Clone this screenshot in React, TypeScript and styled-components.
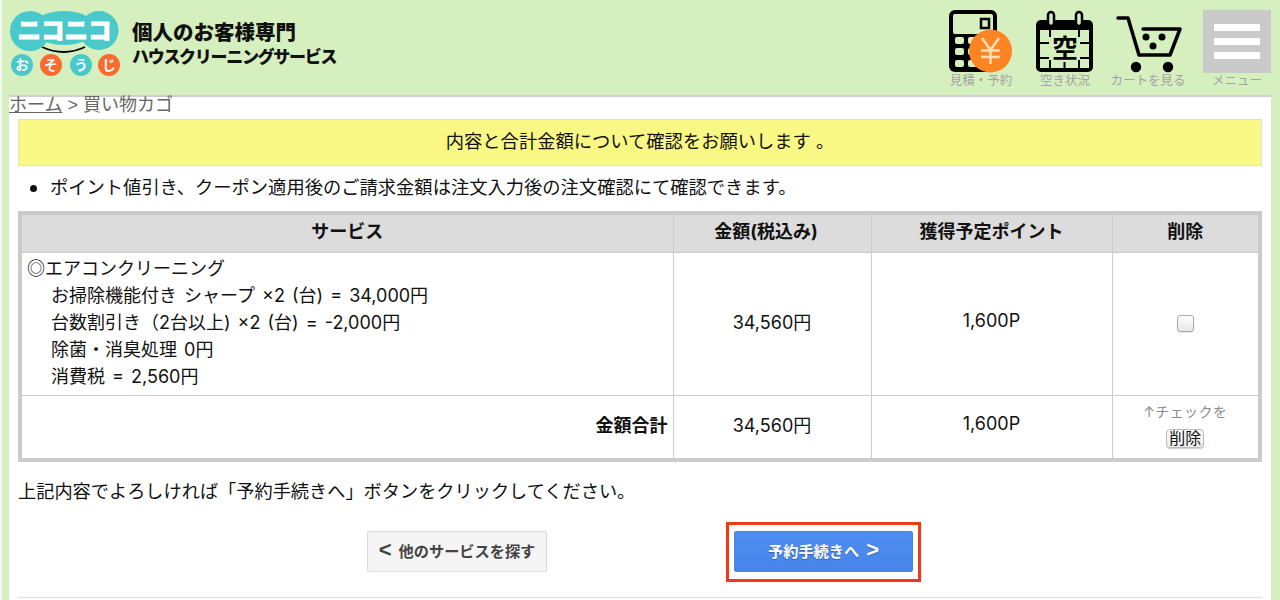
import React from 'react'
import styled, { createGlobalStyle } from 'styled-components'

const fontStack = '"Liberation Sans", "Noto Sans CJK JP", sans-serif'
const tableFont = 'Inter, "Noto Sans CJK JP", sans-serif'
const green = '#d6efbf'

const GlobalStyle = createGlobalStyle`
  html, body {
    margin: 0;
    height: 600px;
    overflow: hidden;
    background: ${green};
    font-family: ${fontStack};
    color: #111;
  }
`

const Shell = styled.div`
  display: flex;
  height: 600px;
`

const LeftEdge = styled.div`
  width: 2px;
  background: #f4f8f0;
`

const Page = styled.div`
  flex: 1;
  min-width: 0;
`

const Header = styled.header`
  display: flex;
  justify-content: space-between;
  height: 95px;
  padding: 0 9px 0 7px;
`

const Brand = styled.div`
  display: flex;
  align-items: flex-start;
  gap: 12px;
  padding-top: 8px;
`

const LogoArt = styled.svg`
  display: block;
  width: 111px;
  height: 72px;
`

const Tagline = styled.div`
  display: flex;
  flex-direction: column;
  margin-top: 12px;
  color: #111;
  font-weight: 900;
`

const TaglineMain = styled.div`
  font-size: 20.5px;
  line-height: 26px;
`

const TaglineSub = styled.div`
  font-size: 17px;
  line-height: 24px;
  letter-spacing: -1.3px;
  white-space: nowrap;
`

const Nav = styled.nav`
  display: flex;
  align-items: flex-start;
`

const NavItem = styled.a<{ $width: number }>`
  display: flex;
  flex-direction: column;
  align-items: center;
  width: ${(p) => p.$width}px;
  padding-top: 10px;
  color: #a3a3a3;
  font-size: 12.5px;
  line-height: 16px;
  white-space: nowrap;
`

const MenuItem = styled(NavItem)`
  margin-left: 13px;
`

const NavIcon = styled.svg`
  display: block;
  width: 70px;
  height: 63px;
`

const MenuBox = styled.div`
  display: flex;
  flex-direction: column;
  justify-content: center;
  gap: 7px;
  width: 68px;
  height: 63px;
  padding: 0 11px;
  box-sizing: border-box;
  background: #cacaca;
`

const MenuBar = styled.span`
  height: 7px;
  background: #fff;
`

const Main = styled.main`
  height: 505px;
  margin: 0 9px 0 7px;
  padding: 0 9px;
  border-top: 2px solid #cfcfcf;
  box-sizing: border-box;
  background: #fff;
`

const Breadcrumb = styled.div`
  height: 22px;
  margin-left: -9px;
  color: #666;
  font-size: 18px;
  line-height: 17px;
  white-space: nowrap;

  a {
    color: #666;
    text-decoration: underline;
  }
`

const Notice = styled.div`
  height: 47px;
  border: 1px solid #ddd;
  box-sizing: border-box;
  background: #f9f885;
  font-size: 18.3px;
  line-height: 43px;
  text-align: center;
`

const NoteList = styled.ul`
  height: 45px;
  margin: 0;
  padding: 0 0 0 12px;
  list-style: none;
  font-size: 18.3px;
  line-height: 43px;
`

const NoteItem = styled.li`
  display: flex;
  align-items: center;

  &::before {
    content: '';
    flex: none;
    width: 7px;
    height: 7px;
    margin: 2px 13px 0 0;
    border-radius: 50%;
    background: #111;
  }
`

const CartTable = styled.table`
  width: 1244px;
  border-collapse: collapse;
  border: 4px solid #cbcbcb;
  table-layout: fixed;
  font-family: ${tableFont};
`

const HeadCell = styled.th<{ $width?: number; $inset?: number }>`
  width: ${(p) => (p.$width ? `${p.$width}px` : 'auto')};
  height: 39px;
  padding: 0 ${(p) => p.$inset || 0}px 6px 0;
  border: 1px solid #cbcbcb;
  box-sizing: border-box;
  background: #dcdcdc;
  font-size: 18px;
  font-weight: 700;
  text-align: center;
`

const Row = styled.tr<{ $height: number }>`
  height: ${(p) => p.$height}px;
`

const Cell = styled.td<{ $align?: string }>`
  padding: 0 5px 2px;
  border: 1px solid #cbcbcb;
  font-size: 18px;
  text-align: ${(p) => p.$align || 'center'};
`

const AmountCell = styled(Cell)`
  padding-bottom: 6px;
`

const ServiceName = styled.div`
  line-height: 27px;
`

const ServiceLine = styled.div`
  padding-left: 24px;
  line-height: 27px;
  word-spacing: 2px;
  white-space: nowrap;
`

const CheckBox = styled.span`
  display: inline-block;
  width: 15px;
  height: 15px;
  margin-top: 5px;
  border: 1px solid #aaa;
  border-radius: 3px;
  background: linear-gradient(#fff, #e6e6e6);
  box-shadow: 0 1px 1px rgba(0, 0, 0, 0.1);
`

const CheckHint = styled.div`
  margin-bottom: 7px;
  color: #8a8a8a;
  font-size: 14px;
  line-height: 17px;
  letter-spacing: 0.4px;
  white-space: nowrap;
`

const SmallButton = styled.span`
  display: inline-block;
  padding: 0 2px;
  border: 1px solid #bbb;
  border-radius: 4px;
  background: linear-gradient(#fff, #ececec);
  box-shadow: 0 1px 1px rgba(0, 0, 0, 0.2);
  font-size: 16px;
  line-height: 17px;
`

const Confirm = styled.p`
  height: 60px;
  margin: 0;
  font-size: 18.2px;
  line-height: 60px;
`

const Actions = styled.div`
  display: flex;
  justify-content: center;
  align-items: flex-start;
  gap: 179px;
  height: 60px;
  margin-left: 8px;
`

const ActionButton = styled.a<{ $primary?: boolean }>`
  display: flex;
  align-items: center;
  justify-content: center;
  gap: 7px;
  box-sizing: border-box;
  width: ${(p) => (p.$primary ? '179px' : '180px')};
  height: 41px;
  margin-top: ${(p) => (p.$primary ? '0' : '9px')};
  padding-bottom: 4px;
  border: 1px solid ${(p) => (p.$primary ? '#4a85e6' : '#dcdcdc')};
  border-radius: 2px;
  background: ${(p) => (p.$primary ? 'linear-gradient(#4d8df2, #4785ea)' : '#f5f5f5')};
  color: ${(p) => (p.$primary ? '#fff' : '#444')};
  font-size: 15.2px;
  font-weight: 700;
  text-shadow: ${(p) => (p.$primary ? '0 1px 1px rgba(0, 0, 0, 0.3)' : 'none')};
  white-space: nowrap;
`

const Arrow = styled.span`
  font-size: 22px;
  line-height: 20px;
`

const Highlight = styled.div`
  padding: 6px 5px 7px;
  border: 3px solid #f03a17;
`

const BottomRule = styled.hr`
  margin: 15px 0 0;
  border: 0;
  border-top: 1px solid #ddd;
`

const LogoMark = () => (
  <LogoArt viewBox="0 0 111 72">
    <path d="M33 39Q54.500 49 76 39" fill="none" stroke="#000" strokeWidth="1.800" />
    <circle cx="21" cy="23" r="20" fill="#4ac9cb" />
    <ellipse cx="55" cy="20" rx="32" ry="17" fill="#4ac9cb" />
    <circle cx="90" cy="22.500" r="19.500" fill="#4ac9cb" />
    <text x="55.500" y="31" textAnchor="middle" fontSize="23.500" fontWeight="900" fill="#fff" stroke="#fff" strokeWidth="0.800" fontFamily={fontStack}>
      ニコニコ
    </text>
    {[
      { x: 13, tone: '#4ac9cb', label: 'お' },
      { x: 42, tone: '#fb6b2d', label: 'そ' },
      { x: 72, tone: '#4ac9cb', label: 'う' },
      { x: 100, tone: '#fb6b2d', label: 'じ' },
    ].map((dot) => (
      <g key={dot.label}>
        <circle cx={dot.x} cy="57" r="11" fill={dot.tone} />
        <text x={dot.x} y="62" textAnchor="middle" fontSize="13.500" fontWeight="700" fill="#fff" fontFamily={fontStack}>
          {dot.label}
        </text>
      </g>
    ))}
  </LogoArt>
)

const CalcIcon = () => (
  <NavIcon viewBox="0 0 70 63">
    <rect x="3" y="0" width="48" height="62" rx="6" fill="#000" />
    <rect x="7" y="4" width="40" height="20" rx="2" fill={green} />
    <rect x="35" y="9" width="8" height="9" fill={green} stroke="#000" strokeWidth="2.500" />
    {[27, 38, 50].map((y) =>
      [9, 22, 34].map((x) => <rect key={`${x}-${y}`} x={x} y={y} width="9" height="7" rx="2" fill={green} />)
    )}
    <circle cx="44.500" cy="41" r="21.500" fill="#ff8524" />
    <path d="M36 28l8.500 12 8.500-12M44.500 40v14M35 40.500h19M35 47h19" fill="none" stroke="#fbe0b5" strokeWidth="2.500" />
  </NavIcon>
)

const CalendarIcon = () => (
  <NavIcon viewBox="0 0 70 63">
    <rect x="6" y="10" width="57" height="52" rx="5" fill="#000" />
    <rect x="10" y="20" width="49" height="38" fill={green} />
    <path d="M10 33h9M10 48h9M50 33h9M50 48h9M20 20v7M49 20v7M20 50v8M34.500 52v6M49 50v8" stroke="#000" strokeWidth="2" />
    <rect x="18" y="2" width="6" height="14" rx="3" fill={green} stroke="#000" strokeWidth="2.500" />
    <rect x="46" y="2" width="6" height="14" rx="3" fill={green} stroke="#000" strokeWidth="2.500" />
    <text x="35" y="47.500" textAnchor="middle" fontSize="26" fontWeight="700" fontFamily={fontStack} fill="#000">
      空
    </text>
  </NavIcon>
)

const CartIcon = () => (
  <NavIcon viewBox="0 0 70 63">
    <path d="M5 8h10l11 37h31l10-26H30" fill="none" stroke="#000" strokeWidth="3.500" strokeLinejoin="round" strokeLinecap="round" />
    <circle cx="33" cy="27" r="3.500" fill="#000" />
    <circle cx="40" cy="36" r="3.500" fill="#000" />
    <circle cx="49" cy="27" r="3.500" fill="#000" />
    <circle cx="23" cy="57" r="5.200" fill="#000" />
    <circle cx="55" cy="57" r="5.200" fill="#000" />
  </NavIcon>
)

const App = () => (
  <>
    <GlobalStyle />
    <Shell>
      <LeftEdge />
      <Page>
        <Header>
          <Brand>
            <LogoMark />
            <Tagline>
              <TaglineMain>個人のお客様専門</TaglineMain>
              <TaglineSub>ハウスクリーニングサービス</TaglineSub>
            </Tagline>
          </Brand>
          <Nav>
            <NavItem $width={86}>
              <CalcIcon />
              見積・予約
            </NavItem>
            <NavItem $width={82}>
              <CalendarIcon />
              空き状況
            </NavItem>
            <NavItem $width={84}>
              <CartIcon />
              カートを見る
            </NavItem>
            <MenuItem $width={68}>
              <MenuBox>
                <MenuBar />
                <MenuBar />
                <MenuBar />
              </MenuBox>
              メニュー
            </MenuItem>
          </Nav>
        </Header>
        <Main>
          <Breadcrumb>
            <a>ホーム</a> &gt; 買い物カゴ
          </Breadcrumb>
          <Notice>内容と合計金額について確認をお願いします 。</Notice>
          <NoteList>
            <NoteItem>ポイント値引き、クーポン適用後のご請求金額は注文入力後の注文確認にて確認できます。</NoteItem>
          </NoteList>
          <CartTable>
            <thead>
              <tr>
                <HeadCell>サービス</HeadCell>
                <HeadCell $width={198} $inset={12}>
                  金額(税込み)
                </HeadCell>
                <HeadCell $width={241}>獲得予定ポイント</HeadCell>
                <HeadCell $width={148}>削除</HeadCell>
              </tr>
            </thead>
            <tbody>
              <Row $height={143}>
                <Cell $align="left">
                  <ServiceName>◎エアコンクリーニング</ServiceName>
                  <ServiceLine>お掃除機能付き シャープ ×2 (台) = 34,000円</ServiceLine>
                  <ServiceLine>台数割引き（2台以上) ×2 (台) = -2,000円</ServiceLine>
                  <ServiceLine>除菌・消臭処理 0円</ServiceLine>
                  <ServiceLine>消費税 = 2,560円</ServiceLine>
                </Cell>
                <AmountCell>34,560円</AmountCell>
                <AmountCell>1,600P</AmountCell>
                <Cell>
                  <CheckBox />
                </Cell>
              </Row>
              <Row $height={65}>
                <AmountCell $align="right">
                  <strong>金額合計</strong>
                </AmountCell>
                <AmountCell>34,560円</AmountCell>
                <AmountCell>1,600P</AmountCell>
                <Cell>
                  <CheckHint>↑チェックを</CheckHint>
                  <SmallButton>削除</SmallButton>
                </Cell>
              </Row>
            </tbody>
          </CartTable>
          <Confirm>上記内容でよろしければ「予約手続きへ」ボタンをクリックしてください。</Confirm>
          <Actions>
            <ActionButton>
              <Arrow>&lt;</Arrow>他のサービスを探す
            </ActionButton>
            <Highlight>
              <ActionButton $primary>
                予約手続きへ<Arrow>&gt;</Arrow>
              </ActionButton>
            </Highlight>
          </Actions>
          <BottomRule />
        </Main>
      </Page>
    </Shell>
  </>
)

export default App
